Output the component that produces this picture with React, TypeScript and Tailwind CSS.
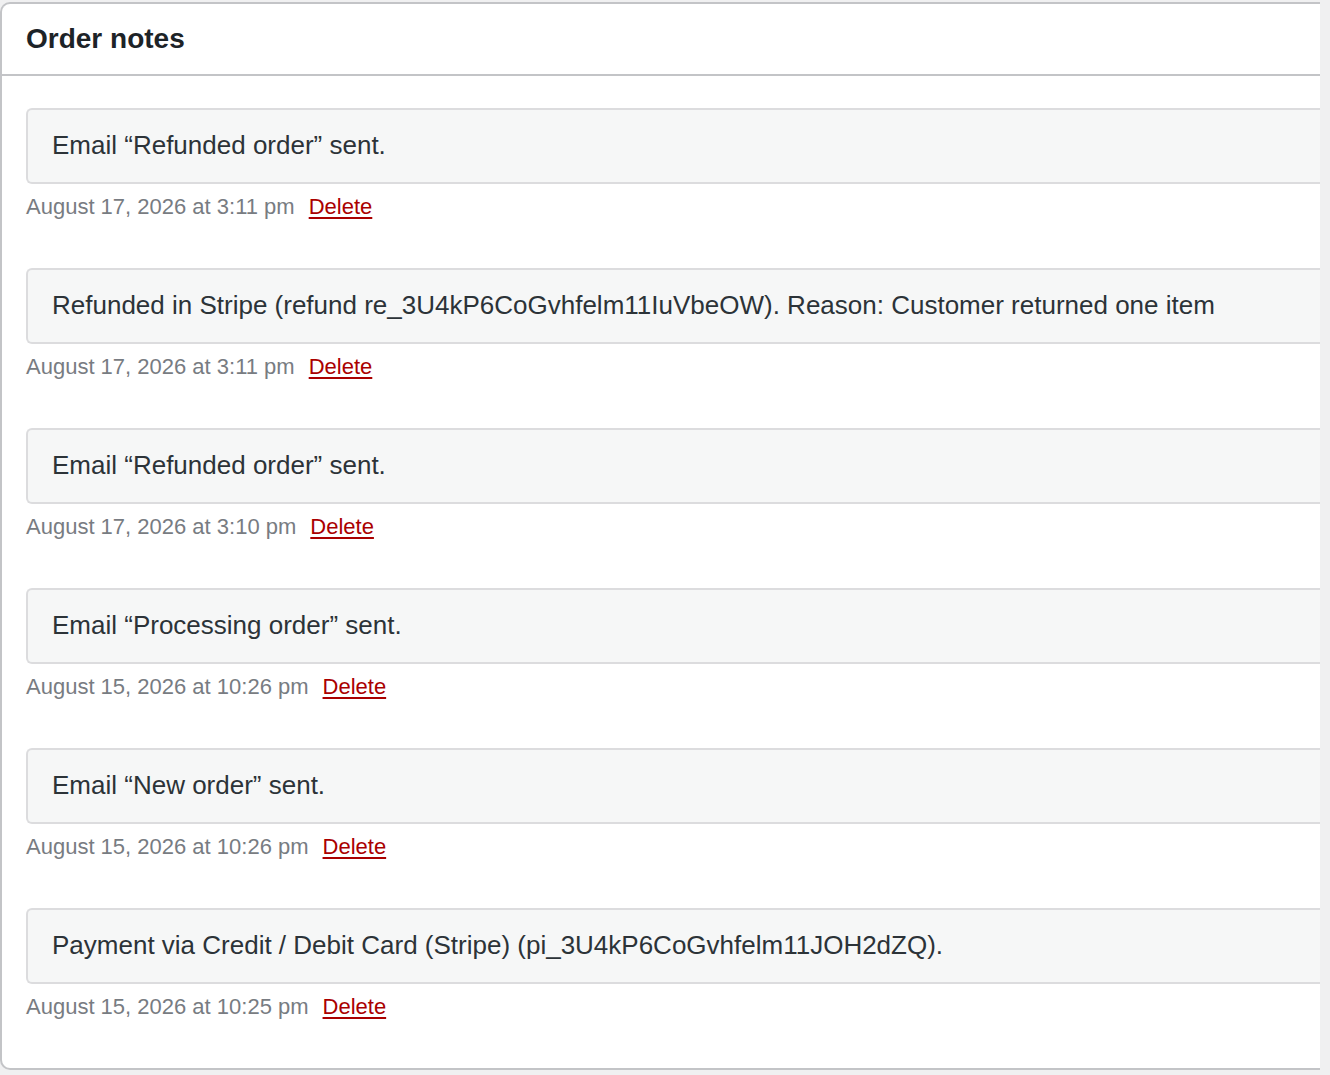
import React from "react";

type Note = {
  content: string;
  date: string;
};

const notes: Note[] = [
  { content: "Email \u201cRefunded order\u201d sent.", date: "August 17, 2026 at 3:11 pm" },
  {
    content:
      "Refunded in Stripe (refund re_3U4kP6CoGvhfelm11IuVbeOW). Reason: Customer returned one item",
    date: "August 17, 2026 at 3:11 pm",
  },
  { content: "Email \u201cRefunded order\u201d sent.", date: "August 17, 2026 at 3:10 pm" },
  { content: "Email \u201cProcessing order\u201d sent.", date: "August 15, 2026 at 10:26 pm" },
  { content: "Email \u201cNew order\u201d sent.", date: "August 15, 2026 at 10:26 pm" },
  {
    content: "Payment via Credit / Debit Card (Stripe) (pi_3U4kP6CoGvhfelm11JOH2dZQ).",
    date: "August 15, 2026 at 10:25 pm",
  },
];

function NoteItem({ note }: { note: Note }) {
  return (
    <li className="mb-[45px] last:mb-0">
      <div className="rounded-l-[6px] border-2 border-r-0 border-[#dcdcde] bg-[#f6f7f7] px-[24px] pt-[19px] pb-[21px]">
        <p className="text-[26px] leading-[32px] text-[#2c3338]">{note.content}</p>
      </div>
      <p className="mt-[6px] text-[22px] leading-[33px] text-[#787c82]">
        {note.date}
        <a
          href="#"
          className="ml-[14px] text-[#a00] underline decoration-[2px] underline-offset-[3px]"
          onClick={(e) => e.preventDefault()}
        >
          Delete
        </a>
      </p>
    </li>
  );
}

export default function App() {
  return (
    <div
      className="h-[1075px] w-[1330px] overflow-hidden bg-[#f0f0f1] pt-[2px] pr-[10px]"
      style={{ fontFamily: '"Liberation Sans", Arial, sans-serif' }}
    >
      <div className="h-[1068px] rounded-l-[10px] border-2 border-r-0 border-[#c3c4c7] bg-white">
        <div className="flex h-[72px] items-center border-b-2 border-[#c3c4c7] px-[24px]">
          <h2 className="text-[28px] font-bold text-[#1d2327]">Order notes</h2>
        </div>
        <ul className="pl-[24px] pt-[32px]">
          {notes.map((note, i) => (
            <NoteItem key={i} note={note} />
          ))}
        </ul>
      </div>
    </div>
  );
}
